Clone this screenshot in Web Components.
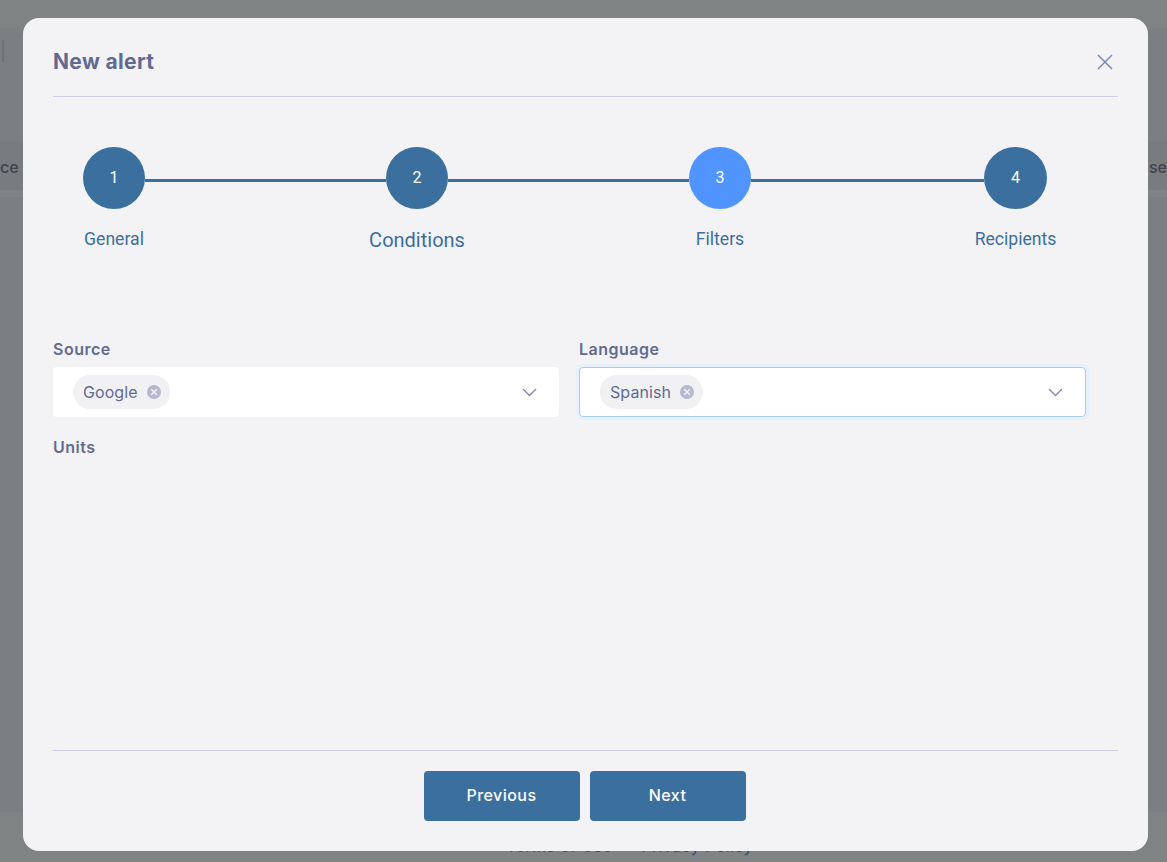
<!DOCTYPE html>
<html><head><meta charset="utf-8"><style>
html,body{margin:0;height:100%;overflow:hidden}
body{background:#808384}
</style></head><body>
<app-backdrop></app-backdrop>
<alert-modal>
  <alert-stepper slot="stepper"></alert-stepper>
  <form-select slot="body" style="--w:506px" label="Source" value="Google"></form-select>
  <form-select slot="body" style="--w:507px" label="Language" value="Spanish" focused></form-select>
  <form-field slot="body" label="Units"></form-field>
</alert-modal>
<script>
const F='"Inter","Liberation Sans",sans-serif';
function el(name,html){customElements.define(name,class extends HTMLElement{
  connectedCallback(){ if(this.shadowRoot)return; const r=this.attachShadow({mode:'open'}); r.innerHTML=typeof html==='function'?html(this):html; }
});}
el('app-backdrop',`<style>
:host{display:flex;flex-direction:column;height:862px;font-family:${F};color:#3e4350;font-size:15px;overflow:hidden}
.head{height:28px;background:#808384;flex:none}
.top{height:114px;padding:15px 0 0 0;box-sizing:border-box;color:#6a6d6f;font-size:18px;line-height:18px;background:#7c7f81}
.band{height:48px;background:#797c7e;display:flex;justify-content:space-between;align-items:center;padding-top:2px;box-sizing:border-box;font-size:16px;font-weight:500}
.sep{height:7px;background:#808385}
.grow{flex:1;background:#7c7f81}
.foot{height:50px;display:flex;justify-content:center;padding:24px 0 0 92px;box-sizing:border-box;font-size:16px;line-height:20px;color:#33506e;flex:none;letter-spacing:.4px}
</style>
<div class="head"></div>
<div class="top">|</div>
<div class="band"><span>ce</span><span>se</span></div>
<div class="sep"></div><div class="grow"></div>
<div class="foot">Terms of Use &nbsp;•&nbsp; Privacy Policy</div>`);
el('alert-modal',`<style>
:host{position:absolute;left:23px;top:18px;width:1125px;height:833px;box-sizing:border-box;background:#f3f3f6;border-radius:16px;padding:0 30px;display:flex;flex-direction:column;font-family:${F}}
header{height:79px;flex:none;display:flex;align-items:center;justify-content:space-between;border-bottom:1px solid #cfcfe6;padding-top:9px;box-sizing:border-box}
h2{margin:0;font-size:21px;font-weight:700;color:#626a90;letter-spacing:.35px}
svg{display:block;margin-right:4px}
.st{flex:none;padding-top:50px;height:122px}
.body{flex:1;display:flex;flex-wrap:wrap;column-gap:20px;align-content:flex-start;padding-top:71px}
footer{flex:none;border-top:1px solid #cfcfe6;height:101px;box-sizing:border-box;display:flex;justify-content:center;gap:10px;padding:20px 2px 0 0}
button{width:156px;height:50px;border:0;border-radius:4px;background:#3b6f9e;color:#fff;font:500 16px ${F};letter-spacing:.45px;padding:0 0 2px}
</style>
<header><h2>New alert</h2><svg width="18" height="18" viewBox="0 0 18 18" fill="none" stroke="#7e88ad" stroke-width="1.5"><path d="M2 2l14 14M16 2L2 16"/></svg></header>
<div class="st"><slot name="stepper"></slot></div>
<div class="body"><slot name="body"></slot></div>
<footer><button>Previous</button><button>Next</button></footer>`);
el('alert-stepper',`<style>
:host{display:flex;padding-left:30px;font-family:Roboto,sans-serif}
.s{width:62px;display:flex;flex-direction:column;align-items:center;flex:none}
.c{width:62px;height:62px;border-radius:50%;background:#3b6f9e;color:#fff;font-size:16px;display:flex;align-items:center;justify-content:center;padding-bottom:2px;box-sizing:border-box}
.c.a{background:#4f94ff}
.l{margin-top:20px;font-size:17.6px;line-height:20px;color:#3b6f9e;white-space:nowrap}
.l.b{font-size:20px;margin-top:21px}
.k{flex:none;height:3px;background:#3b6f9e;margin-top:32px}
</style>
<div class="s"><div class="c">1</div><div class="l">General</div></div><div class="k" style="width:241px"></div>
<div class="s"><div class="c">2</div><div class="l b">Conditions</div></div><div class="k" style="width:241px"></div>
<div class="s"><div class="c a">3</div><div class="l">Filters</div></div><div class="k" style="width:233px"></div>
<div class="s" style="width:63px"><div class="c" style="width:63px">4</div><div class="l">Recipients</div></div>`);
const lbl=`label{display:block;font-size:16px;font-weight:600;color:#626a90;line-height:18px;height:27px;letter-spacing:.5px}`;
el('form-select',t=>`<style>
:host{display:block;width:var(--w);font-family:${F};margin-bottom:21px}
${lbl}
.box{height:50px;box-sizing:border-box;background:#fff;border-radius:4px;display:flex;align-items:center;justify-content:space-between;padding:0 22px 0 20px}
.box.f{border:1px solid #a5cdec;box-shadow:0 0 0 3px #e8f1fb;padding:0 22px 0 20px}
.chip{height:34px;border-radius:17px;background:#f1f1f4;display:flex;align-items:center;gap:9px;padding:0 9px 0 10px;color:#626a90;font-size:16px;letter-spacing:.08px}
svg{display:block}
</style>
<label>${t.getAttribute('label')}</label>
<div class="box ${t.hasAttribute('focused')?'f':''}"><span class="chip">${t.getAttribute('value')}<svg width="14" height="14" viewBox="0 0 14 14"><circle cx="7" cy="7" r="7" fill="#b6b8d3"/><path d="M4.2 4.2l5.6 5.6M9.8 4.2L4.2 9.8" stroke="#f1f1f4" stroke-width="1.6"/></svg></span>
<svg width="15" height="9" viewBox="0 0 15 9" fill="none" stroke="#7e88ad" stroke-width="1.3"><path d="M1 1l6.5 6.5L14 1"/></svg></div>`);
el('form-field',t=>`<style>:host{display:block;width:100%;font-family:${F}}${lbl}</style><label>${t.getAttribute('label')}</label>`);
</script>
</body></html>
